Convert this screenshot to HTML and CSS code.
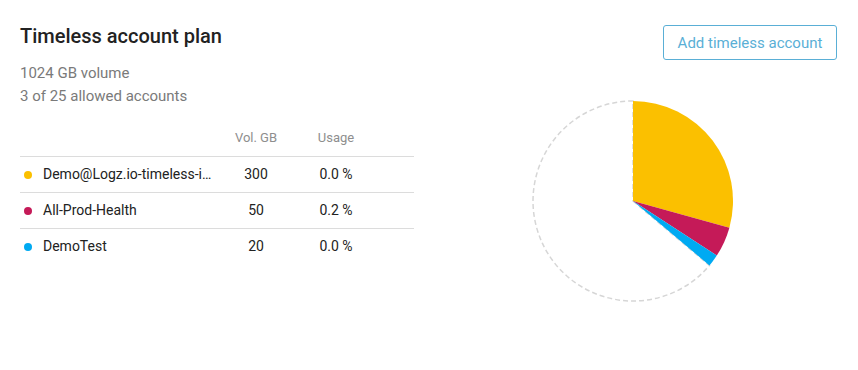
FILE: index.html
```html
<!DOCTYPE html>
<html lang="en">
<head>
    <meta charset="UTF-8">
    <title>Timeless account plan</title>
    <link rel="stylesheet" href="styles.css">
</head>
<body>
    <div class="plan">
        <div class="plan-info">
            <h2 class="plan-title">Timeless account plan</h2>
            <div class="plan-meta">
                <div>1024 GB volume</div>
                <div>3 of 25 allowed accounts</div>
            </div>

            <table class="accounts">
                <thead>
                    <tr>
                        <th class="col-name"></th>
                        <th class="col-num">Vol. GB</th>
                        <th class="col-num">Usage</th>
                        <th></th>
                    </tr>
                </thead>
                <tbody>
                    <tr>
                        <td class="col-name"><span class="dot dot-yellow"></span><span class="name" title="Demo@Logz.io-timeless-index">Demo@Logz.io-timeless-i…</span></td>
                        <td class="col-num">300</td>
                        <td class="col-num">0.0 %</td>
                        <td></td>
                    </tr>
                    <tr>
                        <td class="col-name"><span class="dot dot-red"></span><span class="name">All-Prod-Health</span></td>
                        <td class="col-num">50</td>
                        <td class="col-num">0.2 %</td>
                        <td></td>
                    </tr>
                    <tr>
                        <td class="col-name"><span class="dot dot-blue"></span><span class="name">DemoTest</span></td>
                        <td class="col-num">20</td>
                        <td class="col-num">0.0 %</td>
                        <td></td>
                    </tr>
                </tbody>
            </table>
        </div>

        <div class="plan-chart">
            <button class="btn-outline">Add timeless account</button>
            <svg class="pie" width="202" height="202" viewBox="0 0 202 202">
                <path d="M101 101 L177.49 165.42 A100 100 0 1 1 101 1 Z" fill="none" stroke="#d6d6d6" stroke-width="1.5" stroke-dasharray="5 3"/>
                <path d="M101 101 L101 1 A100 100 0 0 1 197.39 127.69 Z" fill="#fbc000"/>
                <path d="M101 101 L197.39 127.69 A100 100 0 0 1 184.80 155.56 Z" fill="#c51a58"/>
                <path d="M101 101 L184.80 155.56 A100 100 0 0 1 177.49 165.42 Z" fill="#00aaf2"/>
            </svg>
        </div>
    </div>
</body>
</html>
```

FILE: styles.css
```css
* {
    margin: 0;
    padding: 0;
    box-sizing: border-box;
}

body {
    font-family: Roboto, 'Liberation Sans', sans-serif;
    color: #222;
    background: #fff;
}

.plan {
    display: flex;
    padding: 25px 21px 0 20px;
}

.plan-info {
    width: 394px;
}

.plan-title {
    font-size: 20px;
    font-weight: 500;
    line-height: 22px;
    color: #222;
}

.plan-meta {
    margin-top: 15px;
    font-size: 15px;
    line-height: 23px;
    color: #7a7a7a;
}

.accounts {
    width: 100%;
    margin-top: 11px;
    border-collapse: collapse;
    font-size: 14px;
}

.accounts th {
    height: 37px;
    font-size: 13px;
    font-weight: 400;
    color: #8e8e8e;
    border-bottom: 1px solid #dcdcdc;
    vertical-align: middle;
}

.accounts td {
    height: 36px;
    border-bottom: 1px solid #dcdcdc;
    vertical-align: middle;
    color: #222;
}

.accounts tbody tr:last-child td {
    border-bottom: none;
}

.col-name {
    width: 196px;
    white-space: nowrap;
}

.col-num {
    width: 80px;
    text-align: center;
}

.dot {
    display: inline-block;
    width: 8px;
    height: 8px;
    border-radius: 50%;
    margin: 0 11px 0 4px;
    vertical-align: 0;
}

.dot-yellow { background: #fbc000; }
.dot-red { background: #c51a58; }
.dot-blue { background: #00aaf2; }

.plan-chart {
    flex: 1;
    display: flex;
    flex-direction: column;
    align-items: flex-end;
}

.btn-outline {
    font-family: inherit;
    font-size: 15px;
    color: #5aafd6;
    background: #fff;
    border: 1px solid #5aafd6;
    border-radius: 3px;
    width: 174px;
    height: 35px;
}

.pie {
    align-self: flex-start;
    margin: 40px 0 0 118px;
}
```
